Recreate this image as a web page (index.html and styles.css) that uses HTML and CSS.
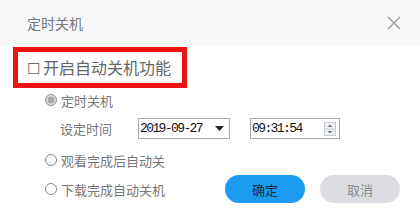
FILE: index.html
```html
<!DOCTYPE html>
<html>
<head>
<meta charset="utf-8">
<link rel="stylesheet" href="styles.css">
</head>
<body>
<div class="dialog">
  <div class="header">
    <span class="title">定时关机</span>
    <svg class="close" width="14" height="14" viewBox="0 0 14 14"><path d="M1 1L13 13M13 1L1 13" stroke="#9a9a9a" stroke-width="1.4" fill="none"/></svg>
  </div>
  <div class="body">
    <div class="enable"><span class="box">☐</span>开启自动关机功能</div>
    <div class="row opt o1"><span class="radio checked"></span><span>定时关机</span></div>
    <div class="row settime">
      <span class="label">设定时间</span>
      <div class="field date"><span>2019-09-27</span><svg width="9" height="5" viewBox="0 0 9 5"><path d="M0 0H9L4.5 5Z" fill="#222"/></svg></div>
      <div class="field time"><span>09:31:54</span>
        <div class="spin"><svg width="12" height="14" viewBox="0 0 12 14"><rect x="0.5" y="0.5" width="11" height="13" fill="#eef0f3" stroke="#c8ccd2"/><line x1="1" y1="7" x2="11" y2="7" stroke="#c8ccd2"/><path d="M3.5 5L6 2.5L8.5 5Z" fill="#6d7a88"/><path d="M3.5 9L6 11.5L8.5 9Z" fill="#6d7a88"/></svg></div>
      </div>
    </div>
    <div class="row opt o2"><span class="radio"></span><span>观看完成后自动关</span></div>
    <div class="row last">
      <div class="opt"><span class="radio"></span><span>下载完成自动关机</span></div>
      <div class="buttons">
        <button class="btn ok">确定</button>
        <button class="btn cancel">取消</button>
      </div>
    </div>
  </div>
</div>
</body>
</html>
```
FILE: styles.css
```css
html, body { margin: 0; padding: 0; background: #fff; }
body { width: 420px; height: 220px; overflow: hidden; font-family: "Noto Sans CJK SC", "Noto Sans", sans-serif; color: #666; }
.dialog { display: flex; flex-direction: column; }
.header { height: 45px; background: #f7f7f9; display: flex; align-items: center; justify-content: space-between; padding: 0 19px 0 27px; }
.title { font-size: 14px; color: #777; }
.close { display: block; }
.body { padding-top: 2px; }
.enable { margin-left: 13px; width: 155px; height: 31px; border: 5px solid #ee1111; font-size: 16px; line-height: 31px; color: #666; padding-left: 9px; white-space: nowrap; display: flex; align-items: center; }
.box { font-size: 15px; margin-right: 3px; color: #666; }
.row { display: flex; align-items: center; }
.opt { display: flex; align-items: center; font-size: 13px; color: #777; margin-left: 45px; gap: 4px; }
.o1 { margin-top: 1px; height: 22px; }
.radio { width: 10px; height: 10px; border: 1px solid #888; border-radius: 50%; box-sizing: content-box; }
.radio.checked { background: #aaa; border-color: #999; box-shadow: inset 0 0 0 1.5px #e4e4e4; }
.settime { margin-left: 60px; margin-top: 7px; font-size: 13px; }
.label { width: 78px; color: #777; }
.field { height: 19px; border: 1px solid #a8a8a8; display: flex; align-items: center; justify-content: space-between; font-family: "Liberation Mono", "DejaVu Sans Mono", monospace; font-size: 13px; letter-spacing: -1.6px; color: #111; padding: 0 3px 0 1px; box-sizing: content-box; }
.date { width: 84px; padding-right: 5px; }
.time { width: 84px; margin-left: 20px; }
.spin svg { display: block; }
.o2 { margin-top: 10px; height: 22px; }
.last { margin-top: 4px; justify-content: space-between; }
.last .opt { margin-left: 45px; }
.buttons { display: flex; gap: 15px; margin-right: 20px; }
.btn { width: 80px; height: 28px; border: none; border-radius: 14px; font-family: "Noto Sans CJK SC", sans-serif; font-size: 13px; padding: 0; }
.ok { background: #1b9cf2; color: #1d2b3a; }
.cancel { background: #dcdde3; color: #8a8a8a; }
```
